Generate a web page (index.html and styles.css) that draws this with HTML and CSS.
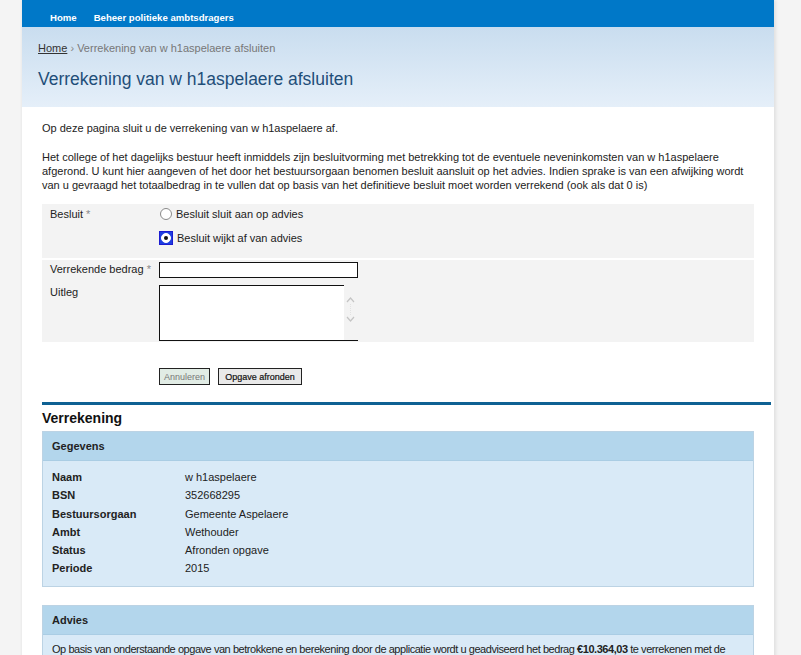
FILE: index.html
```html
<!DOCTYPE html>
<html lang="nl">
<head>
<meta charset="utf-8">
<title>Verrekening van w h1aspelaere afsluiten</title>
<link rel="stylesheet" href="styles.css">
</head>
<body>
<div class="page">
  <nav class="topnav">
    <a href="#">Home</a>
    <a href="#">Beheer politieke ambtsdragers</a>
  </nav>
  <header class="pagehead">
    <div class="crumbs"><a href="#">Home</a> <span class="sep">›</span> Verrekening van w h1aspelaere afsluiten</div>
    <h1 class="title">Verrekening van w h1aspelaere afsluiten</h1>
  </header>
  <main class="content">
    <p class="intro">Op deze pagina sluit u de verrekening van w h1aspelaere af.</p>
    <p class="intro2">Het college of het dagelijks bestuur heeft inmiddels zijn besluitvorming met betrekking tot de eventuele neveninkomsten van w h1aspelaere<br>afgerond. U kunt hier aangeven of het door het bestuursorgaan benomen besluit aansluit op het advies. Indien sprake is van een afwijking wordt<br>van u gevraagd het totaalbedrag in te vullen dat op basis van het definitieve besluit moet worden verrekend (ook als dat 0 is)</p>

    <div class="formblock first">
      <div class="flabel">Besluit <span class="req">*</span></div>
      <div class="fctrl options">
        <label class="opt"><span class="radio"></span>Besluit sluit aan op advies</label>
        <label class="opt"><span class="focusbox"><span class="radio checked"></span></span>Besluit wijkt af van advies</label>
      </div>
    </div>
    <div class="formblock second">
      <div class="frow">
        <div class="flabel">Verrekende bedrag <span class="req">*</span></div>
        <div class="fctrl"><div class="textinput"></div></div>
      </div>
      <div class="frow">
        <div class="flabel">Uitleg</div>
        <div class="fctrl">
          <div class="textarea">
            <div class="ta-body"></div>
            <div class="ta-scroll">
              <svg width="13" height="40" viewBox="0 0 13 40"><path d="M3 17 L6.5 13 L10 17" fill="none" stroke="#c4c4c4" stroke-width="1.2"/><path d="M3 32 L6.5 36 L10 32" fill="none" stroke="#c4c4c4" stroke-width="1.2"/><path d="M6.5 19 V30" stroke="#e2e2e2" stroke-width="1" stroke-dasharray="1 1"/></svg>
            </div>
          </div>
        </div>
      </div>
    </div>

    <div class="buttons">
      <button class="btn cancel" type="button">Annuleren</button>
      <button class="btn primary" type="button">Opgave afronden</button>
    </div>

    <div class="rule"></div>
    <h2 class="section">Verrekening</h2>

    <section class="panel">
      <div class="panel-head">Gegevens</div>
      <dl class="panel-body">
        <div class="drow"><dt>Naam</dt><dd>w h1aspelaere</dd></div>
        <div class="drow"><dt>BSN</dt><dd>352668295</dd></div>
        <div class="drow"><dt>Bestuursorgaan</dt><dd>Gemeente Aspelaere</dd></div>
        <div class="drow"><dt>Ambt</dt><dd>Wethouder</dd></div>
        <div class="drow"><dt>Status</dt><dd>Afronden opgave</dd></div>
        <div class="drow"><dt>Periode</dt><dd>2015</dd></div>
      </dl>
    </section>

    <section class="panel advies">
      <div class="panel-head">Advies</div>
      <div class="panel-text">Op basis van onderstaande opgave van betrokkene en berekening door de applicatie wordt u geadviseerd het bedrag <b>€10.364,03</b> te verrekenen met de betrokkene.</div>
    </section>
  </main>
</div>
</body>
</html>
```

FILE: styles.css
```css
html, body {
  margin: 0;
  padding: 0;
}
body {
  background: #f4f4f4;
  font-family: "Liberation Sans", Arial, sans-serif;
  font-size: 11px;
  color: #222;
}
.page {
  width: 752px;
  margin-left: 22px;
  background: #fff;
  box-shadow: 2px 0 3px rgba(0,0,0,0.08), -1px 0 2px rgba(0,0,0,0.04);
  min-height: 655px;
}
.topnav {
  height: 27px;
  box-sizing: border-box;
  background: #0078c8;
  display: flex;
  align-items: flex-start;
  gap: 17px;
  padding: 11px 0 0 28px;
}
.topnav a {
  color: #fff;
  font-weight: bold;
  text-decoration: none;
  font-size: 9.6px;
  line-height: 13px;
}
.pagehead {
  height: 80px;
  box-sizing: border-box;
  padding: 14px 16px 0;
  background: linear-gradient(#c9ddef, #e5eff9);
}
.crumbs {
  line-height: 14px;
  color: #777;
}
.crumbs a {
  color: #333;
  text-decoration: underline;
}
.crumbs .sep { color: #888; }
.title {
  margin: 13px 0 0;
  font-weight: normal;
  font-size: 17.5px;
  line-height: 22px;
  color: #1f4e79;
}
.content {
  padding: 14px 20px 0;
}
.content p {
  margin: 0;
  line-height: 14px;
}
.intro { margin-bottom: 15px !important; }
.intro2 { margin-bottom: 12px !important; }

.formblock {
  background: #f3f3f3;
}
.formblock.first {
  display: flex;
  padding-bottom: 10px;
  margin-bottom: 2px;
}
.flabel {
  width: 109px;
  padding-left: 8px;
  flex-shrink: 0;
  line-height: 20px;
}
.req { color: #888; }
.options {
  display: flex;
  flex-direction: column;
  gap: 4px;
}
.opt {
  display: flex;
  align-items: center;
  height: 20px;
  gap: 4px;
}
.radio {
  width: 10px;
  height: 10px;
  border: 1px solid #8a8a8a;
  border-radius: 50%;
  background: #fff;
  box-sizing: content-box;
  display: inline-block;
  position: relative;
  margin-left: 1px;
}
.radio.checked::after {
  content: "";
  position: absolute;
  left: 3px;
  top: 3px;
  width: 4px;
  height: 4px;
  border-radius: 50%;
  background: #111;
}
.focusbox {
  display: inline-flex;
  width: 12px;
  height: 12px;
  border: 1px solid #1b1bd0;
  background: #1e3ee0;
  align-items: center;
  justify-content: center;
}
.focusbox .radio {
  width: 8px;
  height: 8px;
  margin: 0;
  border-color: #fff;
}
.focusbox .radio.checked::after {
  left: 2px;
  top: 2px;
}

.formblock.second {
  padding: 2px 0 1px;
}
.frow {
  display: flex;
}
.frow + .frow { margin-top: 7px; }
.frow .flabel { line-height: 14px; }
.frow:first-child .flabel { line-height: 15px; }
.textinput {
  width: 197px;
  height: 14px;
  border: 1px solid #111;
  background: #fff;
}
.textarea {
  display: flex;
  width: 199px;
  height: 56px;
}
.ta-body {
  flex: 1;
  border: 1px solid #111;
  border-right: none;
  background: #fff;
}
.ta-scroll {
  width: 14px;
  background: #f3f3f3;
  border-bottom: 1px solid #111;
  display: flex;
  align-items: flex-start;
}
.ta-scroll svg { display: block; }

.buttons {
  display: flex;
  gap: 8px;
  padding-left: 117px;
  margin-top: 26px;
}
.btn {
  font-family: "Liberation Sans", Arial, sans-serif;
  font-size: 9px;
  height: 17px;
  padding: 0 4px;
  border: 1px solid #222;
  margin: 0;
}
.btn.cancel {
  background: #e1ece5;
  color: #777;
  width: 51px;
}
.btn.primary {
  background: #e9e9e9;
  color: #111;
  width: 84px;
  -webkit-text-stroke: 0.2px #111;
}
.rule {
  height: 3px;
  background: #0e6193;
  margin: 17px -17px 0 0;
}
.section {
  margin: 4px 0 0;
  font-size: 14px;
  line-height: 18px;
  font-weight: bold;
  color: #111;
}
.panel {
  margin-top: 4px;
  background: #d9eaf7;
  border: 1px solid #bcd3e4;
}
.panel-head {
  background: #b3d6ec;
  height: 28px;
  line-height: 28px;
  padding-left: 9px;
  font-weight: bold;
  border-bottom: 1px solid #aacde4;
}
.panel-body {
  margin: 0;
  padding: 7px 0 8px;
}
.drow {
  display: flex;
  line-height: 18.3px;
}
.drow dt {
  width: 133px;
  padding-left: 9px;
  font-weight: bold;
}
.drow dd {
  margin: 0;
}
.panel.advies {
  margin-top: 18px;
}
.panel-text {
  padding: 7px 9px;
  line-height: 14px;
  letter-spacing: -0.45px;
}
```
